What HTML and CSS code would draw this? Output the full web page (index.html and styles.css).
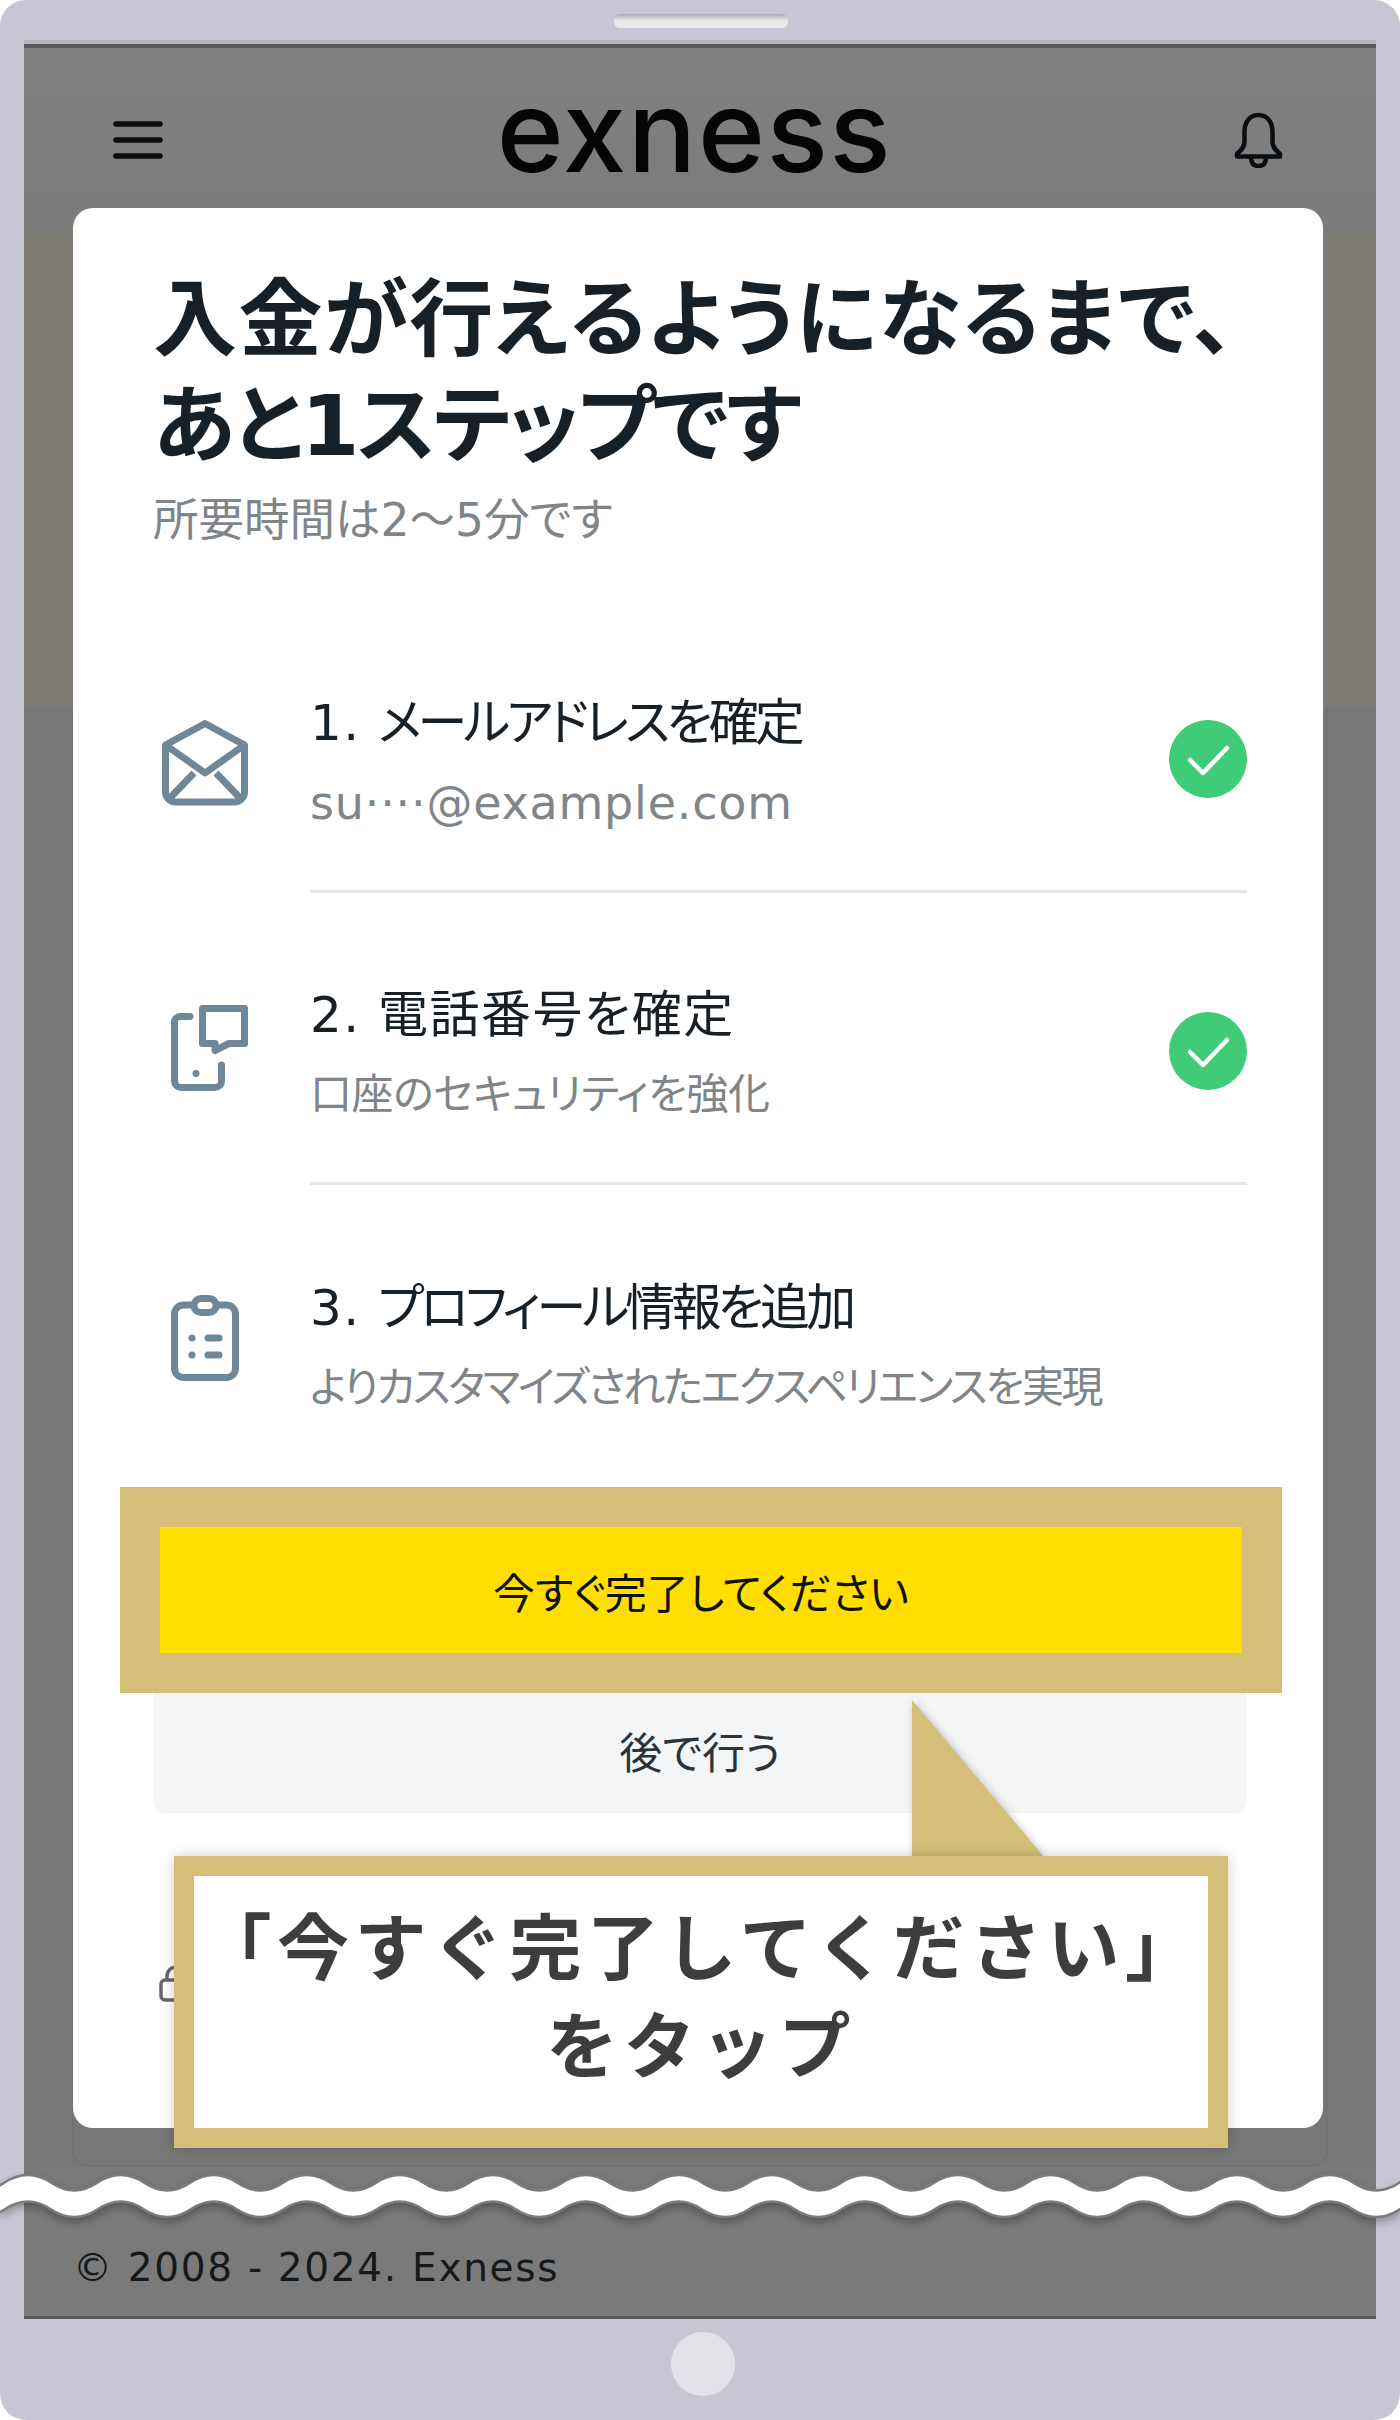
FILE: index.html
```html
<!DOCTYPE html>
<html lang="ja">
  <head>
    <meta charset="UTF-8" />
    <meta name="viewport" content="width=device-width, initial-scale=1.0" />
    <title>Exness</title>
    <link rel="stylesheet" href="styles.css">
  </head>
  <body>
    <div class="device">
      <div class="top-bezel"><div class="speaker"></div></div>

      <div class="screen">
        <div class="header">
          <svg class="menu-icon" width="50" height="38" viewBox="0 0 50 38" fill="none" stroke="#0a0e12" stroke-width="5.5" stroke-linecap="round">
            <path d="M3 3H47M3 19H47M3 35H47" />
          </svg>
          <div class="logo">exness</div>
          <svg class="bell-icon" width="49" height="56" viewBox="0 0 49 56" fill="none" stroke="#0a0e12" stroke-width="4.5" stroke-linejoin="round" stroke-linecap="round">
            <path d="M24.5 3c-9.500 0-14 8-14 17v10c0 5-3 8-7.500 12v2.500h43V42c-4.500-4-7.500-7-7.500-12V20c0-9-4.500-17-14-17z" />
            <path d="M17 45c0 7 3 9 7.500 9s7.500-2 7.500-9" />
          </svg>
        </div>
        <div class="banner"></div>
        <div class="panel"></div>
        <div class="footer">© 2008 - 2024. Exness</div>

        <div class="modal">
          <h1 class="modal-title"><span class="title-wide">入金が行えるようになるまで、</span><br /><span class="title-tight">あと1ステップです</span></h1>
          <p class="modal-sub">所要時間は2～5分です</p>

          <div class="step first">
            <div class="step-icon">
              <svg class="icon-mail" width="86" height="86" viewBox="0 0 86 86" fill="none" stroke="#6f8899" stroke-width="7" stroke-linejoin="round">
                <path d="M3.500 25 43 3.500 82.500 25v47a10 10 0 0 1-10 10h-59a10 10 0 0 1-10-10z" />
                <path d="M3.500 25 43 53l39.500-28M7 79l25-26M79 79 54 53" />
              </svg>
            </div>
            <div class="step-body">
              <div class="step-text">
                <div class="step-title tight"><span class="step-num">1.</span>メールアドレスを確定</div>
                <div class="step-desc email">su····@example.com</div>
              </div>
              <svg class="check" width="78" height="78" viewBox="0 0 78 78">
                <circle cx="39" cy="39" r="39" fill="#3fcb78" />
                <path d="M21 40l13 13 24-25" fill="none" stroke="#fff" stroke-width="4.500" stroke-linecap="round" stroke-linejoin="round" />
              </svg>
            </div>
          </div>

          <div class="step">
            <div class="step-icon">
              <svg class="icon-phone" width="77" height="86" viewBox="0 0 77 86" fill="none" stroke="#6f8899" stroke-width="7" stroke-linejoin="round" stroke-linecap="round">
                <path d="M19 11.500H9a5.500 5.500 0 0 0-5.500 5.500v59a6.500 6.500 0 0 0 6.500 6.500h34a6.500 6.500 0 0 0 6.500-6.500V60" />
                <path d="M31.500 3.500h42v35H58l-14 7v-7H31.500z" />
                <circle cx="25" cy="68.500" r="3.500" fill="#6f8899" stroke="none" />
              </svg>
            </div>
            <div class="step-body">
              <div class="step-text">
                <div class="step-title wide"><span class="step-num">2.</span>電話番号を確定</div>
                <div class="step-desc">口座のセキュリティを強化</div>
              </div>
              <svg class="check" width="78" height="78" viewBox="0 0 78 78">
                <circle cx="39" cy="39" r="39" fill="#3fcb78" />
                <path d="M21 40l13 13 24-25" fill="none" stroke="#fff" stroke-width="4.500" stroke-linecap="round" stroke-linejoin="round" />
              </svg>
            </div>
          </div>

          <div class="step">
            <div class="step-icon">
              <svg class="icon-clip" width="68" height="86" viewBox="0 0 68 86" fill="none" stroke="#6f8899" stroke-width="7" stroke-linecap="round">
                <rect x="3.500" y="10" width="61" height="72.500" rx="9" />
                <rect x="23" y="3.500" width="22" height="14" rx="7" fill="#fff" />
                <path d="M37 43h11M37 60h11" />
                <circle cx="21" cy="43" r="3.600" fill="#6f8899" stroke="none" />
                <circle cx="21" cy="60" r="3.600" fill="#6f8899" stroke="none" />
              </svg>
            </div>
            <div class="step-body last">
              <div class="step-text">
                <div class="step-title tight"><span class="step-num">3.</span>プロフィール情報を追加</div>
                <div class="step-desc tight">よりカスタマイズされたエクスペリエンスを実現</div>
              </div>
            </div>
          </div>

          <button class="btn btn-primary">今すぐ完了してください</button>
          <button class="btn btn-later">後で行う</button>

          <svg class="lock-icon" width="34" height="36" viewBox="0 0 34 36" fill="none" stroke="#63686c" stroke-width="3.500">
            <rect x="2" y="14" width="30" height="20" rx="4" />
            <path d="M8 14V10a9 9 0 0 1 18 0v4" />
          </svg>
        </div>
      </div>

      <div class="bottom-bezel"><div class="home-button"></div></div>

      <div class="callout">
        <svg class="callout-tail" width="132" height="157" viewBox="0 0 132 157">
          <path d="M0 0 131 156H0z" fill="#d4be78" />
        </svg>
        <div class="callout-box">「今すぐ完了してください」<br />をタップ</div>
      </div>

      <svg class="wave" width="1400" height="64" viewBox="0 0 1400 64">
        <path fill="#fff" stroke="#7b7b7b" stroke-width="5" paint-order="stroke" d="M-42 14q23.250 15.500 46.500 0t46.500 0t46.500 0t46.500 0t46.500 0t46.500 0t46.500 0t46.500 0t46.500 0t46.500 0t46.500 0t46.500 0t46.500 0t46.500 0t46.500 0t46.500 0t46.500 0t46.500 0t46.500 0t46.500 0t46.500 0t46.500 0t46.500 0t46.500 0t46.500 0t46.500 0t46.500 0t46.500 0t46.500 0t46.500 0t46.500 0t46.500 0V38q-23.250 -15.500 -46.500 0t-46.500 0t-46.500 0t-46.500 0t-46.500 0t-46.500 0t-46.500 0t-46.500 0t-46.500 0t-46.500 0t-46.500 0t-46.500 0t-46.500 0t-46.500 0t-46.500 0t-46.500 0t-46.500 0t-46.500 0t-46.500 0t-46.500 0t-46.500 0t-46.500 0t-46.500 0t-46.500 0t-46.500 0t-46.500 0t-46.500 0t-46.500 0t-46.500 0t-46.500 0t-46.500 0t-46.500 0z" />
      </svg>
    </div>
  </body>
</html>
```

FILE: styles.css
```css
* {
  margin: 0;
  padding: 0;
  box-sizing: border-box;
  font-family: "DejaVu Sans", "Noto Sans CJK JP", sans-serif;
}

body {
  background-color: #ffffff;
}

.device {
  position: relative;
  height: 2420px;
  background-color: #c7c7d3;
  border-radius: 26px;
  display: flex;
  flex-direction: column;
  overflow: hidden;
}

.top-bezel {
  height: 40px;
  padding: 14px 0 0 2px;
  display: flex;
  justify-content: center;
}

.speaker {
  width: 174px;
  height: 14px;
  border-radius: 6px;
  background: linear-gradient(#a9a9b0, #e9e9ea 45%, #e9e9ea);
}

.screen {
  position: relative;
  flex: 1;
  margin: 0 24px;
  display: flex;
  flex-direction: column;
  background-color: #777777;
  border-top: 4px solid #b7b7bd;
  border-bottom: 3px solid #575757;
}

.header {
  height: 188px;
  border-top: 4px solid #5a5a5a;
  background: linear-gradient(#808080, #7c7c7c);
  display: flex;
  align-items: center;
  justify-content: space-between;
  padding: 0 93px 0 89px;
}

.logo {
  font-family: "Inter", sans-serif;
  font-size: 114px;
  font-weight: 500;
  letter-spacing: 1.500px;
  line-height: 120px;
  color: #050505;
  margin: -18px 0 0 -8px;
}

.banner {
  height: 474px;
  background-color: #7c7a72;
}

.panel {
  flex: 1;
  margin: 0 48px 0;
  border-radius: 0 0 16px 16px;
  border: 2px solid #727272;
  border-top: none;
}

.footer {
  height: 149px;
  padding: 80px 49px 0;
  font-size: 39px;
  line-height: 42px;
  letter-spacing: 1.700px;
  color: #15191c;
  background-color: #7a7a7a;
}

.modal {
  position: absolute;
  top: 164px;
  left: 49px;
  width: 1250px;
  height: 1920px;
  background-color: #ffffff;
  border-radius: 20px;
  padding: 59px 76px 0 80px;
  display: flex;
  flex-direction: column;
}

.modal-title {
  font-size: 84px;
  line-height: 106px;
  font-weight: 700;
  color: #162026;
  font-feature-settings: "palt";
  white-space: nowrap;
}

.title-wide {
  letter-spacing: 1.500px;
}

.title-tight {
  letter-spacing: -2.500px;
}

.modal-sub {
  margin-top: 12px;
  font-size: 45.500px;
  line-height: 60px;
  color: #7f8588;
  font-feature-settings: "palt";
}

.step {
  height: 264px;
  margin-top: 28px;
  display: flex;
  align-items: stretch;
}

.step.first {
  margin-top: 78px;
}

.step-icon {
  width: 157px;
  display: flex;
  align-items: center;
}

.icon-mail {
  margin: 4px 0 0 9px;
}

.icon-phone {
  margin: 0 0 10px 18px;
}

.icon-clip {
  margin: 0 0 14px 18px;
}

.step-body {
  flex: 1;
  display: flex;
  align-items: center;
  justify-content: space-between;
  border-bottom: 3px solid #e3e5e6;
}

.step-body.last {
  border-bottom: none;
}

.step-text {
  padding-top: 6px;
}

.step-title {
  font-size: 50px;
  line-height: 80px;
  color: #162026;
  font-feature-settings: "palt";
}

.step-num {
  display: inline-block;
  width: 68px;
  letter-spacing: 1.500px;
}

.step-title.tight {
  letter-spacing: -3.800px;
}

.step-title.wide {
  letter-spacing: 1.500px;
}

.step-desc {
  font-size: 42px;
  line-height: 80px;
  color: #7f8588;
  font-feature-settings: "palt";
  letter-spacing: -0.400px;
}

.step-desc.tight {
  letter-spacing: -2.300px;
}

.step-desc.email {
  font-size: 46px;
  letter-spacing: 0.800px;
}

.check {
  margin-top: -2px;
}

.btn {
  display: block;
  border: none;
  font-size: 42px;
  font-feature-settings: "palt";
  cursor: pointer;
}

.btn-primary {
  position: relative;
  z-index: 2;
  height: 126px;
  margin: 50px 5px 0 7px;
  background-color: #ffde00;
  color: #111111;
  box-shadow: 0 0 0 40px #d4be78;
}

.btn-later {
  height: 126px;
  margin-top: 34px;
  background-color: #f3f5f7;
  color: #2a3338;
  border-radius: 12px;
  font-size: 43px;
}

.lock-icon {
  margin: 153px 0 0 6px;
}

.bottom-bezel {
  height: 101px;
  padding: 13px 0 0 5px;
  display: flex;
  justify-content: center;
}

.home-button {
  width: 64px;
  height: 64px;
  border-radius: 50%;
  background-color: #e2e3e9;
}

.callout {
  position: absolute;
  left: 174px;
  top: 1856px;
  width: 1054px;
  z-index: 3;
}

.callout-tail {
  position: absolute;
  left: 738px;
  top: -156px;
  filter: drop-shadow(2px 2px 4px rgba(0, 0, 0, 0.25));
}

.callout-box {
  position: relative;
  height: 292px;
  border: 20px solid #d4be78;
  background-color: #ffffff;
  box-shadow: 0 0 12px rgba(0, 0, 0, 0.2);
  color: #3d3d3d;
  font-size: 72px;
  font-weight: 700;
  letter-spacing: 5.500px;
  line-height: 98px;
  text-align: center;
  padding-top: 18px;
  font-family: "Noto Sans CJK JP", sans-serif;
}

.wave {
  position: absolute;
  left: 0;
  top: 2170px;
  filter: drop-shadow(0 4px 4px rgba(0, 0, 0, 0.3));
}
```
